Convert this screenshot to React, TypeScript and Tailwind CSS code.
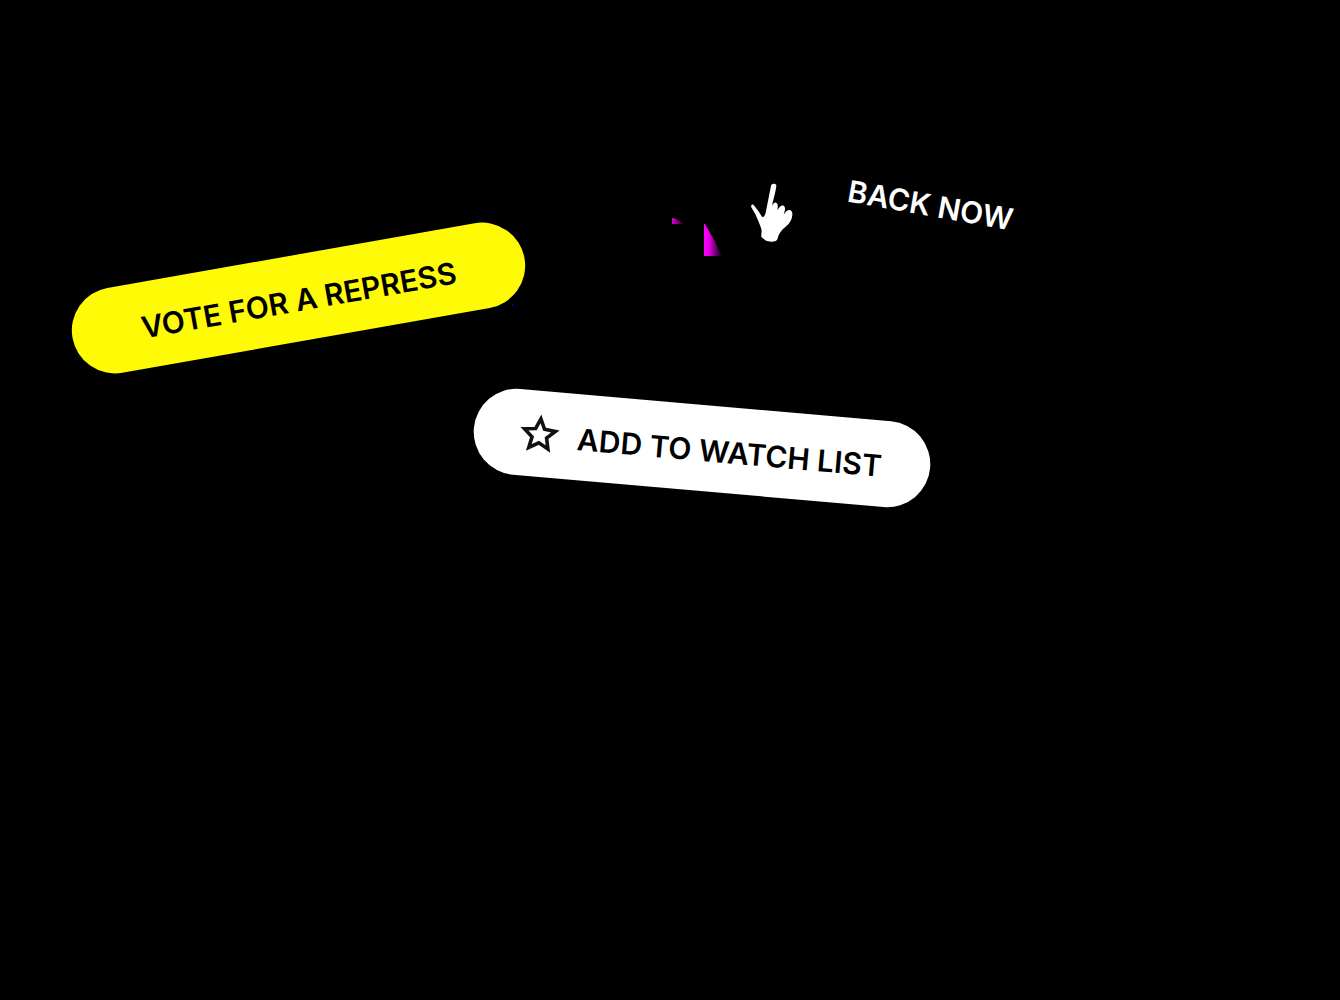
function Hand() {
  return (
    <svg viewBox="30 36 132 183" className="h-[61px] w-11 shrink-0" fill="#fff" aria-hidden="true">
      <path d="M93 47C95 40 105 39 109 45C109 58 102 81 97 103L96 108C99 101 103 97 108 98C113 100 114 105 113 114L112 121C117 111 124 104 131 107C136 110 136 118 133 127L131 134C136 126 142 120 148 120C156 120 159 130 156 141C153 156 144 164 136 171C123 181 116 192 112 208C111 216 89 218 76 211L64 201C63 193 65 187 65 181C63 171 58 162 55 153L46 133L34 112C32 104 37 102 41 105L55 123L66 140C71 143 75 136 77 128L88 73Z" />
    </svg>
  );
}

function Star() {
  return (
    <svg viewBox="0 0 40 40" className="size-10 shrink-0" fill="none" stroke="#111" strokeWidth="3.6" aria-hidden="true">
      <path d="M20 5L24.5 15.1L35.5 16.3L27.3 23.7L29.6 34.5L20 29L10.4 34.5L12.7 23.7L4.5 16.3L15.5 15.1Z" />
    </svg>
  );
}

function Sparks() {
  return (
    <svg viewBox="0 0 50 38" className="mt-9 ml-36 h-[38px] w-[50px] shrink-0 overflow-visible" aria-hidden="true">
      <defs>
        <linearGradient id="small">
          <stop offset="0" stopColor="#d800d8" />
          <stop offset="1" stopColor="#000" />
        </linearGradient>
        <linearGradient id="large">
          <stop offset="0" stopColor="#f0f" />
          <stop offset="0.3" stopColor="#e000e0" />
          <stop offset="1" stopColor="#000" />
        </linearGradient>
      </defs>
      <path d="M0 0H2L13 6H0Z" fill="url(#small)" />
      <path d="M32 6H33L41 20L50 38H32Z" fill="url(#large)" />
      <rect x="-160" y="86" width="1" height="2" fill="#00f" />
    </svg>
  );
}

export default function App() {
  return (
    <main className="min-h-screen overflow-hidden bg-black pt-[182px] font-['Inter',sans-serif] text-[30px] leading-none font-semibold whitespace-nowrap">
      <div className="flex items-start pl-[69px]">
        <button type="button" className="mt-[73px] flex h-[86px] w-[459px] shrink-0 rotate-[-10deg] items-center justify-center rounded-full bg-[#fffa05] pt-1 text-black">
          VOTE FOR A REPRESS
        </button>
        <Sparks />
        <a href="#back" className="ml-7 flex items-start text-white">
          <Hand />
          <span className="mt-2 ml-[53px] rotate-[10deg]">BACK NOW</span>
        </a>
      </div>
      <div className="mt-16 flex pl-[473px]">
        <button type="button" className="flex h-[86px] w-[458px] shrink-0 rotate-5 items-center gap-[18px] rounded-full bg-white pl-[46px] text-black">
          <Star />
          <span className="pt-1">ADD TO WATCH LIST</span>
        </button>
      </div>
    </main>
  );
}
